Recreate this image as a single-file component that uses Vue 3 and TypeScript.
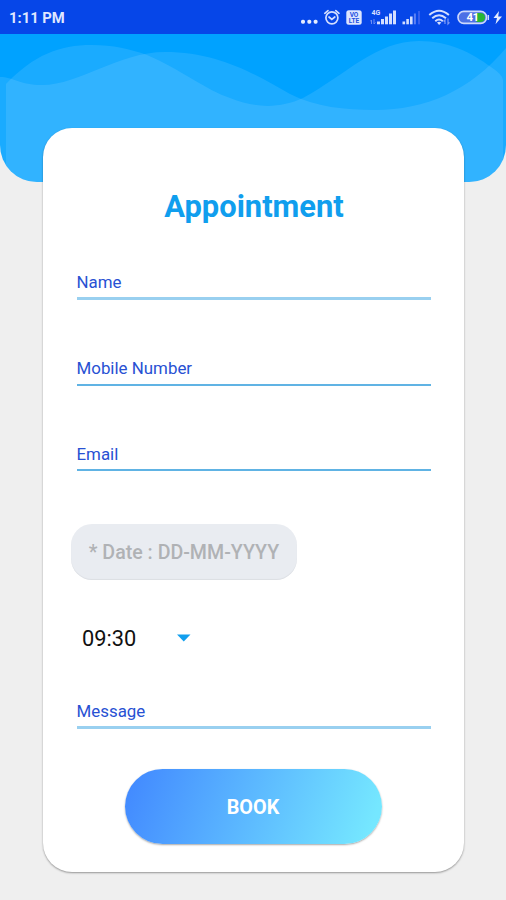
<script setup lang="ts">
import { ref } from 'vue'

interface Field {
  id: string
  label: string
  thick: boolean
}

const fields: Field[] = [
  { id: 'name', label: 'Name', thick: true },
  { id: 'mobile', label: 'Mobile Number', thick: false },
  { id: 'email', label: 'Email', thick: false },
]
const time = ref('09:30')
</script>

<template>
  <div class="screen">
    <div class="status">
      <span class="clock">1:11 PM</span>
      <div class="icons">
        <svg class="icon" width="18" height="34" viewBox="300 0 18 34" fill="#e4ecff">
          <rect x="301" y="19.7" width="4" height="4" rx="1.6" />
          <rect x="307.300" y="19.7" width="4" height="4" rx="1.6" />
          <rect x="313.600" y="19.7" width="4" height="4" rx="1.6" />
        </svg>
        <svg class="icon alarm" width="18" height="34" viewBox="323 0 18 34" fill="none" stroke="#d3deff" stroke-width="1.700">
          <circle cx="331.900" cy="17.800" r="6" />
          <path d="M324.800 13.300L328 10.600M335.800 10.600L339 13.300M329 17L331.800 19.300L334.800 17" stroke-linecap="round" />
        </svg>
        <svg class="icon volte" width="16" height="34" viewBox="346 0 16 34">
          <rect x="346.300" y="10.200" width="15.400" height="14.600" rx="2.500" fill="#dce5ff" />
          <text x="354" y="16.900" class="tiny" text-anchor="middle">VO</text>
          <text x="354" y="23.400" class="tiny" text-anchor="middle">LTE</text>
        </svg>
        <svg class="icon signal" width="27" height="34" viewBox="370 0 27 34" fill="#d3deff">
          <text x="371.500" y="15" class="net">4G</text>
          <path d="M371.500 24V20L370 21.500M374 19V24L375.500 22.500" fill="none" stroke="#6f8ef4" />
          <rect x="377" y="21.500" width="3" height="2.800" />
          <rect x="381" y="19" width="3" height="5.300" />
          <rect x="385" y="16.500" width="3" height="7.800" />
          <rect x="389" y="13.500" width="3" height="10.800" />
          <rect x="393" y="10.500" width="3" height="13.800" />
        </svg>
        <svg class="icon signal2" width="19" height="34" viewBox="402 0 19 34" fill="#d3deff">
          <rect x="402.500" y="21.500" width="2.600" height="2.800" />
          <rect x="406.300" y="19" width="2.600" height="5.300" />
          <rect x="410" y="16.500" width="2.600" height="7.800" />
          <rect x="413.900" y="13.500" width="2" height="10.800" fill="#5c80f3" />
          <rect x="418" y="11" width="2" height="13.300" fill="#365fed" />
        </svg>
        <svg class="icon wifi" width="23" height="34" viewBox="428 0 23 34" fill="none" stroke="#d3deff" stroke-width="2">
          <path d="M429.300 15Q439 6.500 448.900 15M432.200 18.300Q439 12.300 446 18.300M435.300 21.200Q439 17.900 442.800 21.200" />
          <path d="M437 22.600L439.100 25L441.300 22.600Q439 20.800 437 22.600Z" fill="#d3deff" stroke="none" />
          <path d="M445 24V20L443.500 21.500M448 18.500V24L449.500 22.300" stroke="#7d9af6" stroke-width="1.200" />
        </svg>
        <svg class="icon battery" width="33" height="34" viewBox="457 0 33 34">
          <rect x="458" y="11.400" width="28.500" height="12" rx="5.800" fill="#4c70e6" stroke="#ced9fc" stroke-width="1.600" />
          <path d="M476.500 13H481Q485 13.500 485 17.400T481 21.900H476.500Z" fill="#27b536" />
          <path d="M488.300 15V20" stroke="#ced9fc" stroke-width="1.500" />
          <text x="466.500" y="21.300" class="level">41</text>
        </svg>
        <svg class="icon bolt" width="10" height="34" viewBox="493 0 10 34" fill="#e4ecff">
          <path d="M499 11L493.500 18H497L495.500 24.300L502 16.500H498.200Z" />
        </svg>
      </div>
    </div>

    <div class="hero">
      <svg class="waves" width="506" height="148" viewBox="0 34 506 148" fill="#fff" fill-opacity=".102">
        <path d="M6 182V84C34 55 59 45 92 45C113 45 130 49 147 55C180 69 206 90 230 98C257 109 281 108 303 98C347 74 376 41 419 41C449 41 472 53 491 67Q503 75 503 80V182Z" />
        <path d="M0 182V77C13 77 20 85 42 85C80 85 118 52 165 52C218 52 255 74 290 94C316 107 345 110 375 110C425 110 470 91 506 48V182Z" />
      </svg>
    </div>

    <form class="card" @submit.prevent>
      <h1 class="title">Appointment</h1>
      <label v-for="field in fields" :key="field.id" class="field" :class="{ thick: field.thick }">
        <span>{{ field.label }}</span>
      </label>
      <button type="button" class="date">* Date : DD-MM-YYYY</button>
      <div class="time">
        <span>{{ time }}</span>
        <svg width="14" height="8" viewBox="0 0 14 8" fill="#129fee"><path d="M0 .5H13.500L6.750 7.500Z" /></svg>
      </div>
      <label class="field thick message"><span>Message</span></label>
      <button type="submit" class="book">BOOK</button>
    </form>
  </div>
</template>

<style>
body {
  margin: 0;
  background: #efefef;
}
</style>

<style scoped>
.screen {
  width: 506px;
  height: 900px;
  overflow: hidden;
  background: #efefef;
  font-family: Roboto, "Liberation Sans", sans-serif;
}
.status {
  display: flex;
  justify-content: space-between;
  height: 34px;
  padding: 0 3px 0 9px;
  background: #0646e8;
}
.clock {
  color: #dfe7ff;
  font-size: 14.8px;
  font-weight: 700;
  line-height: 36px;
}
.icons {
  display: flex;
}
.icon {
  display: block;
  flex: none;
}
.alarm, .volte, .signal2 {
  margin-left: 5px;
}
.signal {
  margin-left: 8px;
}
.wifi {
  margin-left: 7px;
}
.battery {
  margin-left: 6px;
}
.bolt {
  margin-left: 3px;
}
.tiny {
  fill: #1d50df;
  font-size: 6.5px;
  font-weight: 700;
}
.net {
  font-size: 7px;
  font-weight: 700;
}
.level {
  fill: #fff;
  font-size: 11.5px;
  font-weight: 700;
  letter-spacing: -0.5px;
}
.hero {
  height: 148px;
  overflow: hidden;
  border-radius: 0 0 37px 37px;
  background: #00a2ff;
}
.waves {
  display: block;
}
.card {
  position: relative;
  display: flex;
  flex-direction: column;
  align-items: flex-start;
  box-sizing: border-box;
  width: 421px;
  height: 744px;
  margin: -54px 0 0 43px;
  padding: 59px 33px 28px 34px;
  border-radius: 29px;
  background: #fff;
  box-shadow: 0 1px 2px rgba(0, 0, 0, 0.38);
}
.title {
  align-self: center;
  margin: 0 0 47px;
  color: #109eee;
  font-size: 30.9px;
  font-weight: 700;
  line-height: 40px;
}
.field {
  box-sizing: border-box;
  width: 354px;
  height: 26px;
  margin-bottom: 60px;
  border-bottom: 2px solid #60b3e4;
  color: #2851d3;
  font-size: 16.9px;
  line-height: 16px;
}
.field span {
  margin-left: -0.5px;
}
.field.thick {
  border-bottom: 3px solid #99d0f0;
  height: 26px;
  margin-bottom: 60px;
}
.date {
  width: 226px;
  height: 56px;
  margin: -7px 0 0 -6px;
  padding: 0;
  border: 0;
  border-radius: 21px;
  background: #e9ecf1;
  box-shadow: inset 0 -1px 1px rgba(0, 0, 0, 0.06);
  color: #b0b2b5;
  font: 500 19.6px/57px Roboto, "Liberation Sans", sans-serif;
}
.time {
  display: flex;
  align-items: center;
  justify-content: space-between;
  width: 109px;
  height: 28px;
  margin: 44px 0 51px 5px;
  color: #111;
  font-size: 21.8px;
  line-height: 28px;
}
.time span {
  padding-top: 1px;
}
.field.message {
  margin-bottom: 40px;
}
.book {
  align-self: center;
  width: 257px;
  height: 75px;
  margin-left: -2px;
  padding: 0;
  border: 0;
  border-radius: 38px;
  background: linear-gradient(110deg, #438bff 4%, #75e7ff 94%);
  box-shadow: 0 1px 2px rgba(0, 0, 0, 0.35);
  color: #fff;
  font: 700 19.8px/77px Roboto, "Liberation Sans", sans-serif;
}
</style>
